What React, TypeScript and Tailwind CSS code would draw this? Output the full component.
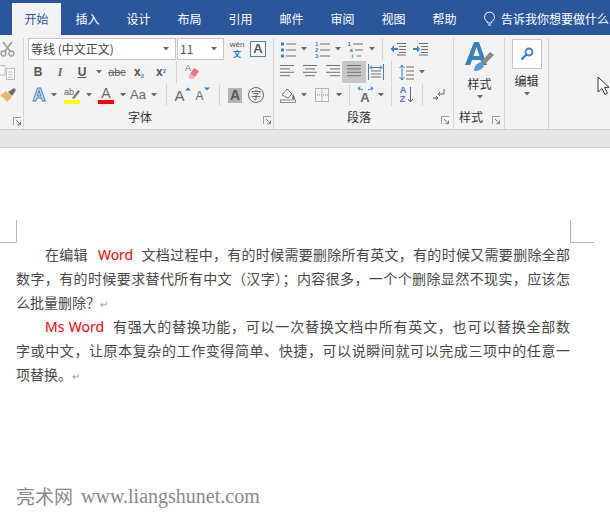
import React from "react";

const cjk = { fontFamily: '"Noto Sans CJK SC", "Noto Sans", sans-serif' };

function Caret({ w = 8 }: { w?: number }) {
  return (
    <span className="flex items-center justify-center shrink-0" style={{ width: w }}>
      <svg width="6" height="4" viewBox="0 0 6 4"><path d="M0 0h6L3 3.5z" fill="#6a6a6a" /></svg>
    </span>
  );
}
function Slot({ w, children, className = "" }: { w: number; children?: React.ReactNode; className?: string }) {
  return (
    <span className={`flex items-center justify-center shrink-0 h-full ${className}`} style={{ width: w }}>
      {children}
    </span>
  );
}
function Sep({ w }: { w: number }) {
  return (
    <span className="flex justify-center shrink-0 h-full" style={{ width: w }}>
      <span className="w-px h-full bg-[#d4d4d4]" />
    </span>
  );
}
function Launcher() {
  return (
    <svg width="9" height="9" viewBox="0 0 9 9" className="shrink-0 mt-[6px]">
      <path d="M0.5 8V0.5H8" fill="none" stroke="#9a9a9a" />
      <path d="M3 3l4 4M7.500 4.500v3.200H4.300" fill="none" stroke="#5f7f9f" />
    </svg>
  );
}
function Lines({ rows, w = 16 }: { rows: [number, number][]; w?: number }) {
  const h = 4 + (rows.length - 1) * 3.4;
  return (
    <svg width={w} height={h + 2} viewBox={`0 0 ${w} ${h + 2}`}>
      {rows.map(([a, b], i) => (
        <path key={i} d={`M${a} ${1.5 + i * 3.4}H${b}`} stroke="#6e6e6e" />
      ))}
    </svg>
  );
}
function ListIcon({ kind }: { kind: number }) {
  const ys = [3, 9, 15];
  const labels = kind === 1 ? ["1", "2", "3"] : ["1", "a", "i"];
  return (
    <svg width="17" height="17" viewBox="0 0 17 17">
      {ys.map((y, i) => (
        <g key={y}>
          {kind === 0 ? (
            <rect x="1" y={y - 1.5} width="3" height="3" fill="#3f7fbf" />
          ) : (
            <text x={kind === 2 ? 0.5 + i * 2 : 1} y={y + 2} fontSize="6" fontWeight="bold" fill="#3f7fbf" fontFamily="Liberation Sans">{labels[i]}</text>
          )}
          <path d={`M${kind === 2 ? 6 + i * 2 : 6} ${y}H${kind === 2 && i === 2 ? 14 : 16}`} stroke="#6e6e6e" />
        </g>
      ))}
    </svg>
  );
}
function IndentIcon({ flip }: { flip?: boolean }) {
  return (
    <svg width="17" height="14" viewBox="0 0 17 14">
      <path d="M7 1.500H16M9 4.500H16M9 7.500H16M9 10.500H16M7 13H16" stroke="#6e6e6e" />
      {flip ? <path d="M1 6h4V3.500L8 7l-3 3.500V8H1z" fill="#3f7fbf" /> : <path d="M8 6H4V3.500L0.500 7 4 10.500V8h4z" fill="#3f7fbf" />}
    </svg>
  );
}

function Tab({ label, active }: { label: string; active?: boolean }) {
  return (
    <div className={`w-[49px] flex items-center justify-center text-[12px] ${active ? "bg-[#f3f3f3] text-[#2b579a]" : "text-white"}`}>
      {label}
    </div>
  );
}

function Row({ children, className = "" }: { children: React.ReactNode; className?: string }) {
  return <div className={`flex items-center h-[22px] mb-px ${className}`}>{children}</div>;
}

function GroupLabel({ label }: { label: string }) {
  return <span className="text-[12px] text-[#333] leading-[16px]">{label}</span>;
}

const glyph = { fontFamily: '"Liberation Sans", sans-serif' };

function FontGroup() {
  return (
    <div className="w-[250px] shrink-0 border-r border-[#d4d4d4] flex flex-col pl-1 h-[91px]">
      <Row>
        <div className="w-[148px] h-[22px] bg-white border border-[#c6c6c6] flex items-center justify-between pl-[2px] pr-[6px] text-[12px] text-[#444]">
          <span>等线 (中文正文)</span><Caret w={6} />
        </div>
        <div className="w-[47px] ml-px h-[22px] bg-white border border-[#c6c6c6] flex items-center justify-between pl-[2px] pr-[6px] text-[12px] text-[#555]">
          <span>11</span><Caret w={6} />
        </div>
        <Slot w={26}>
          <span className="flex flex-col items-center leading-[9px] text-[8px]">
            <span className="text-[#555]" style={glyph}>wén</span>
            <span className="text-[#2f75b5] font-bold">文</span>
          </span>
        </Slot>
        <span className="w-[16px] h-[16px] border border-[#4f81bd] flex items-center justify-center text-[13px] font-bold text-[#555] bg-white" style={glyph}>A</span>
      </Row>
      <Row>
        <Slot w={20}><b className="text-[12px] text-[#555]" style={glyph}>B</b></Slot>
        <Slot w={24}><i className="text-[12px] font-bold text-[#666]" style={{ fontFamily: '"Liberation Serif", serif' }}>I</i></Slot>
        <Slot w={20}><b className="text-[12px] text-[#555] underline" style={glyph}>U</b></Slot>
        <Slot w={14}><Caret /></Slot>
        <Slot w={22}><span className="text-[11px] text-[#666] line-through" style={glyph}>abc</span></Slot>
        <Slot w={22}><b className="text-[12px] text-[#555]" style={glyph}>x<sub className="text-[6px] text-[#3f7fbf]">2</sub></b></Slot>
        <Slot w={22}><b className="text-[12px] text-[#555]" style={glyph}>x<sup className="text-[6px] text-[#3f7fbf]">2</sup></b></Slot>
        <Sep w={8} />
        <Slot w={26}>
          <span className="relative flex w-[16px] h-[16px]">
            <span className="text-[9px] leading-[9px] text-[#777]" style={glyph}>A</span>
            <svg width="16" height="16" viewBox="0 0 16 16" className="absolute left-0 top-0">
              <path d="M9 4l5 3-4 6-5-3z" fill="#e8748c" />
              <path d="M5 10l5 3-1.500 2H5L3 13.500z" fill="#f6b6c2" />
            </svg>
          </span>
        </Slot>
      </Row>
      <Row>
        <Slot w={22}>
          <span className="text-[18px] font-bold text-[#dbe7f5] leading-none [-webkit-text-stroke:1px_#4f81bd]" style={glyph}>A</span>
        </Slot>
        <Caret />
        <Slot w={28}>
          <span className="flex flex-col items-center w-[16px]">
            <span className="relative w-[16px] h-[14px]">
              <span className="text-[9px] leading-[12px] text-[#666] block" style={glyph}>ab</span>
              <svg width="16" height="14" viewBox="0 0 16 14" className="absolute left-0 top-0">
                <path d="M8 12l6-8 2 1.500-6 7.500z" fill="#7a7a7a" />
              </svg>
            </span>
            <span className="w-[16px] h-[4px] bg-[#ffff00]" />
          </span>
        </Slot>
        <Slot w={6}><Caret w={6} /></Slot>
        <Slot w={28}>
          <span className="flex flex-col items-center w-[16px]">
            <span className="text-[14px] leading-[14px] text-[#666]" style={glyph}>A</span>
            <span className="w-[16px] h-[4px] bg-[#ff0000]" />
          </span>
        </Slot>
        <Slot w={6}><Caret w={6} /></Slot>
        <Slot w={24}><span className="text-[13px] text-[#666]" style={glyph}>Aa</span></Slot>
        <Caret />
        <Sep w={16} />
        <Slot w={18}>
          <span className="flex items-start w-[17px] h-[17px]">
            <span className="text-[15px] leading-[18px] text-[#666]" style={glyph}>A</span>
            <svg width="6" height="4" viewBox="0 0 6 4"><path d="M0 3.500l3-3 3 3z" fill="#3f7fbf" /></svg>
          </span>
        </Slot>
        <Slot w={22}>
          <span className="flex items-start w-[15px] h-[17px]">
            <span className="text-[12px] leading-[19px] text-[#666]" style={glyph}>A</span>
            <svg width="6" height="4" viewBox="0 0 6 4"><path d="M0 .500l3 3 3-3z" fill="#3f7fbf" /></svg>
          </span>
        </Slot>
        <Sep w={10} />
        <Slot w={22}>
          <span className="w-[14px] h-[15px] bg-[#b4b4b4] flex items-center justify-center text-[14px] font-bold text-[#555]" style={glyph}>A</span>
        </Slot>
        <Slot w={20}>
          <span className="w-[16px] h-[16px] rounded-full border border-[#666] flex items-center justify-center text-[10px] leading-none text-[#555]">字</span>
        </Slot>
      </Row>
      <div className="flex items-center justify-between mt-[2px] pl-[100px] pr-[1px]">
        <GroupLabel label="字体" />
        <Launcher />
      </div>
    </div>
  );
}

function ParagraphGroup() {
  return (
    <div className="w-[180px] shrink-0 border-r border-[#d4d4d4] flex flex-col pl-1 h-[91px]">
      <Row>
        <Slot w={20}><ListIcon kind={0} /></Slot>
        <Slot w={12}><Caret /></Slot>
        <Slot w={24}><ListIcon kind={1} /></Slot>
        <Slot w={8}><Caret /></Slot>
        <Slot w={26}><ListIcon kind={2} /></Slot>
        <Slot w={8}><Caret /></Slot>
        <Sep w={12} />
        <Slot w={20}><IndentIcon /></Slot>
        <Slot w={24}><IndentIcon flip /></Slot>
      </Row>
      <Row>
        <Slot w={20}><Lines rows={[[0, 14], [0, 10], [0, 14], [0, 10]]} /></Slot>
        <Slot w={24}><Lines rows={[[1, 15], [3, 13], [1, 15], [3, 13]]} /></Slot>
        <Slot w={20}><Lines rows={[[2, 16], [6, 16], [2, 16], [6, 16]]} /></Slot>
        <Slot w={24} className="bg-[#c6c6c6]"><Lines rows={[[1, 15], [1, 15], [1, 15], [1, 15]]} /></Slot>
        <Slot w={20}>
          <svg width="16" height="16" viewBox="0 0 16 16">
            <path d="M3 7H13M3 10H13M3 13H13" stroke="#6e6e6e" />
            <path d="M0.500 0V16M15.500 0V16" stroke="#3f7fbf" />
            <path d="M2 3.500H14M2 3.500l2-2M2 3.500l2 2M14 3.500l-2-2M14 3.500l-2 2" stroke="#3f7fbf" fill="none" />
          </svg>
        </Slot>
        <Sep w={10} />
        <Slot w={22}>
          <svg width="16" height="17" viewBox="0 0 16 17">
            <path d="M7 3H15M7 7H15M7 11H15M7 15H15" stroke="#6e6e6e" />
            <path d="M3 1v15M0.500 4L3 1l2.500 3M0.500 13L3 16l2.500-3" stroke="#3f7fbf" fill="none" />
          </svg>
        </Slot>
        <Slot w={8}><Caret /></Slot>
      </Row>
      <Row>
        <Slot w={20}>
          <svg width="17" height="16" viewBox="0 0 17 16">
            <path d="M2 8l5-6 5 5-4 4z" fill="#fff" stroke="#777" />
            <path d="M13 7c1 2 2 3 2 4a1.500 1.500 0 0 1-3 0c0-1 .5-2 1-4z" fill="#6e6e6e" />
            <rect x="0.500" y="13" width="15" height="2.500" fill="#fff" stroke="#888" />
          </svg>
        </Slot>
        <Slot w={12}><Caret /></Slot>
        <Slot w={24}>
          <svg width="14" height="14" viewBox="0 0 14 14">
            <rect x="0.500" y="0.500" width="13" height="13" fill="none" stroke="#777" strokeDasharray="1 1" />
            <path d="M7 0V14M0 7H14" stroke="#888" strokeDasharray="1 1" />
          </svg>
        </Slot>
        <Slot w={10}><Caret /></Slot>
        <Sep w={10} />
        <Slot w={22}>
          <span className="flex flex-col items-center w-[18px] h-[18px]">
            <svg width="17" height="6" viewBox="0 0 17 6">
              <path d="M1 2l5 2M1 2l2.500-1.500M1 2l1.500 2.500M16 2l-5 2M16 2l-2.500-1.500M16 2l-1.500 2.500" stroke="#3f7fbf" fill="none" />
            </svg>
            <b className="text-[13px] leading-[12px] text-[#666]" style={glyph}>A</b>
          </span>
        </Slot>
        <Slot w={10}><Caret /></Slot>
        <Sep w={10} />
        <Slot w={22}>
          <span className="flex items-center gap-px h-[20px]">
            <span className="flex flex-col text-[9px] leading-[9px] font-bold" style={glyph}>
              <span className="text-[#3f7fbf]">A</span>
              <span className="text-[#8a5fb0]">Z</span>
            </span>
            <svg width="7" height="18" viewBox="0 0 7 18"><path d="M3.500 1V16M1 13l2.500 3L6 13" stroke="#666" fill="none" /></svg>
          </span>
        </Slot>
        <Sep w={8} />
        <Slot w={26}>
          <svg width="12" height="14" viewBox="0 0 12 14">
            <path d="M11 1v5H5M7 4L5 6l2 2" stroke="#666" fill="none" />
            <path d="M0 10h5M3 8l2 2-2 2" stroke="#555" fill="none" />
          </svg>
        </Slot>
      </Row>
      <div className="flex items-center justify-between mt-[2px] pl-[69px] pr-[3px]">
        <GroupLabel label="段落" />
        <Launcher />
      </div>
    </div>
  );
}

function StylesGroup() {
  return (
    <div className="w-[51px] shrink-0 border-r border-[#d4d4d4] flex flex-col h-[91px]">
      <div className="h-[69px] flex flex-col items-center pt-[3px] pl-[1px]">
        <svg width="30" height="32" viewBox="0 0 30 32">
          <path d="M0 24L9 1h5l8 23h-5l-1.500-5H7l-2 5zM8.500 15h6L11.500 6z" fill="#3f7fb9" />
          <path d="M16 21l9-10 4 3-9 9z" fill="#8a8a8a" />
          <path d="M9 30c0-5 3-8 7-9l3 3c-1 4-5 6-10 6z" fill="#5b9bd5" />
        </svg>
        <span className="text-[12px] leading-[16px] text-[#333] mt-[3px]">样式</span>
        <span className="mt-[3px]"><Caret /></span>
      </div>
      <div className="flex items-center justify-between mt-[2px] pl-[5px] pr-[3px]">
        <GroupLabel label="样式" />
        <Launcher />
      </div>
    </div>
  );
}

function EditGroup() {
  return (
    <div className="w-[44px] shrink-0 border-r border-[#d4d4d4] flex flex-col items-center h-[91px]">
      <div className="w-[30px] h-[30px] mt-px bg-white border border-[#c6c6c6] flex items-center justify-center">
        <svg width="14" height="14" viewBox="0 0 14 14">
          <circle cx="9" cy="5" r="3.500" fill="none" stroke="#3f7fb9" strokeWidth="1.800" />
          <path d="M6.500 7.500L1.500 12.500" stroke="#3f7fb9" strokeWidth="2.400" />
        </svg>
      </div>
      <span className="text-[12px] leading-[16px] text-[#333] mt-1">编辑</span>
      <span className="mt-[3px]"><Caret /></span>
    </div>
  );
}

const line = "h-[24px] leading-[22px] w-[554px]";
const just = "[text-align-last:justify]";
const red = "text-[#ff0000]";
const latin = { fontFamily: '"Noto Sans", sans-serif' };

export default function App() {
  return (
    <div className="w-[610px] h-[520px] overflow-hidden bg-white relative" style={cjk}>
      <div className="h-[35px] bg-[#2b579a] flex items-stretch pt-[3px] pl-3 gap-[2px]">
        <Tab label="开始" active />
        <Tab label="插入" />
        <Tab label="设计" />
        <Tab label="布局" />
        <Tab label="引用" />
        <Tab label="邮件" />
        <Tab label="审阅" />
        <Tab label="视图" />
        <Tab label="帮助" />
        <div className="flex items-center ml-[12px] gap-[5px] text-white text-[12px] whitespace-nowrap">
          <svg width="13" height="16" viewBox="0 0 13 16">
            <path d="M6.500 1a5 5 0 0 0-3 9c.6.5 1 1.300 1 2h4c0-.7.4-1.500 1-2a5 5 0 0 0-3-9z" fill="none" stroke="#fff" />
            <path d="M5 14h3" stroke="#fff" />
          </svg>
          <span>告诉我你想要做什么</span>
        </div>
      </div>

      <div className="h-[95px] bg-[#f3f3f3] border-b border-[#d2d2d2] flex pt-[3px]">
        <div className="w-[24px] h-[91px] shrink-0 border-r border-[#d4d4d4] flex flex-col items-start overflow-hidden">
          <Row>
            <svg width="15" height="16" viewBox="0 0 15 16">
              <path d="M3 1l7 9M12 1L5 10" stroke="#9a9a9a" strokeWidth="1.500" />
              <circle cx="3.500" cy="12.500" r="2.500" fill="none" stroke="#9a9a9a" strokeWidth="1.300" />
              <circle cx="11.500" cy="12.500" r="2.500" fill="none" stroke="#9a9a9a" strokeWidth="1.300" />
            </svg>
          </Row>
          <Row>
            <svg width="15" height="15" viewBox="0 0 15 15">
              <path d="M-2 0.500H5V10H-2" fill="#f8f8f8" stroke="#bdbdbd" />
              <rect x="6.500" y="3.500" width="8" height="11" fill="#fbfbfb" stroke="#bdbdbd" />
              <path d="M8 7h5M8 9.500h5M8 12h5" stroke="#c8c8c8" />
            </svg>
          </Row>
          <Row>
            <svg width="16" height="16" viewBox="0 0 16 16">
              <path d="M0 9l6-5 6 6-5 5c-2-3-4-5-7-6z" fill="#e7b565" />
              <path d="M8 5l6-4 2 2-4 6z" fill="#6e6e6e" />
            </svg>
          </Row>
          <div className="self-end mt-[4px] pr-px"><Launcher /></div>
        </div>
        <FontGroup />
        <ParagraphGroup />
        <StylesGroup />
        <EditGroup />
      </div>

      <div className="h-[18px] bg-[#e6e6e6] border-b border-[#d4d4d4]" />

      <div className="flex mt-[72px] h-[23px]">
        <div className="w-[17px] border-r border-b border-[#b4b4b4]" />
        <div className="w-[553px]" />
        <div className="w-[24px] border-l border-b border-[#b4b4b4]" />
      </div>

      <div className="pl-4 text-[14px] text-[#484848]">
        <div className={`${line} ${just} indent-[29px]`}>
          在编辑<span className={`${red} ml-[10px] mr-[8px]`} style={latin}>Word</span>文档过程中，有的时候需要删除所有英文，有的时候又需要删除全部
        </div>
        <div className={`${line} ${just}`}>数字，有的时候要求替代所有中文（汉字）；内容很多，一个个删除显然不现实，应该怎</div>
        <div className={line}>么批量删除？<span className="text-[10px] text-[#999]">↵</span></div>
        <div className={`${line} ${just} indent-[29px]`}>
          <span className={`${red} mr-[8px]`} style={latin}>Ms Word</span>有强大的替换功能，可以一次替换文档中所有英文，也可以替换全部数
        </div>
        <div className={`${line} ${just}`}>字或中文，让原本复杂的工作变得简单、快捷，可以说瞬间就可以完成三项中的任意一</div>
        <div className={line}>项替换。<span className="text-[10px] text-[#999]">↵</span></div>
      </div>

      <div className="pl-4 mt-[99px] text-[19px] leading-[20px] text-[#8a8a8a] flex gap-2">
        <span>亮术网</span>
        <span className="text-[20px]" style={{ fontFamily: '"Liberation Serif", serif' }}>www.liangshunet.com</span>
      </div>

      <svg width="14" height="20" viewBox="0 0 14 20" className="absolute left-[597px] top-[76px]">
        <path d="M1 1v15l4-3.500 3 6 2.500-1.200-3-6H12z" fill="#fff" stroke="#333" />
      </svg>
    </div>
  );
}
